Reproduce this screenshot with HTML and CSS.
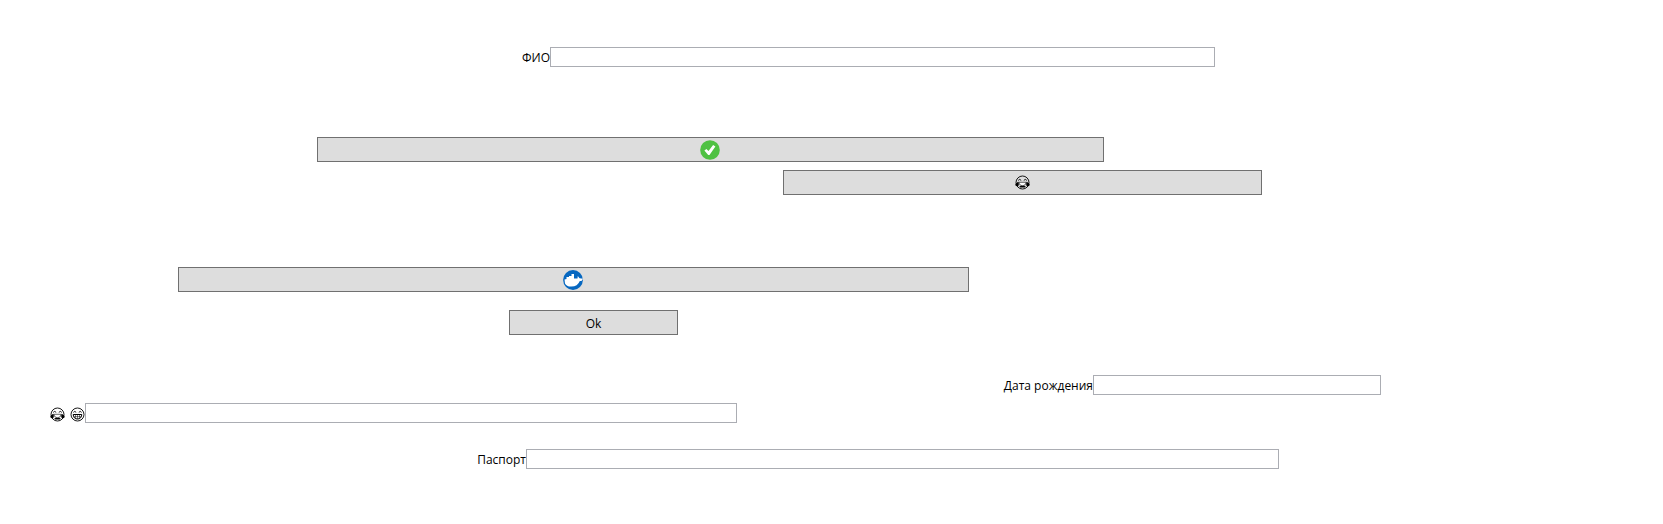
FILE: index.html
```
<!DOCTYPE html>
<html lang="ru">
<head>
<meta charset="utf-8">
<title>Анкета</title>
<link rel="stylesheet" href="styles.css">
</head>
<body>
<svg class="defs" aria-hidden="true">
  <symbol id="joy" viewBox="0 0 15 15">
    <circle cx="7.5" cy="7.5" r="6.5" fill="none" stroke="#000" stroke-width=".9"/>
    <path d="M3.2 5.4Q4.7 3.4 6.2 5.4M8.8 5.4Q10.3 3.4 11.8 5.4" fill="none" stroke="#000" stroke-width=".9"/>
    <path d="M3.8 7.3H11.2Q10.8 10.8 7.5 10.8T3.8 7.3Z" fill="#fff" stroke="#000" stroke-width=".6"/>
    <path d="M3.4 6.8Q4.4 10.3 3 11.2Q.3 11.8.3 9.6Q.7 7.8 3.4 6.8ZM11.6 6.8Q10.6 10.3 12 11.2Q14.7 11.8 14.7 9.6Q14.3 7.8 11.6 6.8Z" fill="#000"/>
    <path d="M4.2 11.2Q7.5 10.3 10.8 11.2L9.8 12.4H5.2Z" fill="#000"/>
  </symbol>
  <symbol id="grin" viewBox="0 0 15 15">
    <circle cx="7.5" cy="7.5" r="6.5" fill="none" stroke="#000" stroke-width=".9"/>
    <path d="M3.4 5.4Q4.8 3.4 6.2 5.4M8.8 5.4Q10.2 3.4 11.6 5.4" fill="none" stroke="#000" stroke-width=".9"/>
    <path d="M3.2 7.5H11.8Q11.4 12 7.5 12T3.2 7.5Z" fill="#fff" stroke="#000"/>
    <path d="M3.5 9.6H11.5M5.5 7.5V11.5M7.5 7.5V12M9.5 7.5V11.5" fill="none" stroke="#000" stroke-width=".5"/>
  </symbol>
</svg>
<form class="form">
  <div class="field field-name">
    <label for="name">ФИО</label>
    <input class="box" id="name" type="text">
  </div>
  <button class="btn btn-check" type="button" aria-label="Готово">
    <svg class="icon" viewBox="0 0 20 20"><circle cx="10" cy="10" r="9.8" fill="#4fc143"/><path d="M4.4 10.6L6.4 8.9L8.5 11L13.1 5.1L15.4 6.6L9.5 15H8.2Z" fill="#fff"/></svg>
  </button>
  <button class="btn btn-joy" type="button" aria-label="Смех">
    <svg class="emoji"><use href="#joy"/></svg>
  </button>
  <button class="btn btn-whale" type="button" aria-label="Docker">
    <svg class="icon" viewBox="0 0 20 20"><circle cx="10" cy="10" r="9.9" fill="#0667c0"/><path d="M1.5 9.5L3.5 9V7H6V6H8.5V4H11V8.5H14.5L14.8 6L16.5 8.2L20 8.8L18.5 11H16.8Q14.5 16.8 8 16.6Q3.4 16.3 2 13.4Z" fill="#fff"/></svg>
  </button>
  <button class="btn btn-ok" type="button">Ok</button>
  <div class="field field-date">
    <label for="date">Дата рождения</label>
    <input class="box" id="date" type="text">
  </div>
  <div class="field field-emoji">
    <label for="mood" aria-label="Настроение"><svg class="emoji"><use href="#joy"/></svg><svg class="emoji"><use href="#grin"/></svg></label>
    <input class="box" id="mood" type="text">
  </div>
  <div class="field field-passport">
    <label for="passport">Паспорт</label>
    <input class="box" id="passport" type="text">
  </div>
</form>
</body>
</html>
```
FILE: styles.css
```
* {
  box-sizing: border-box;
}

body {
  margin: 0;
  background: #fff;
  color: #000;
  font: 12px/16px "Open Sans", "Noto Sans", sans-serif;
}

.defs {
  display: none;
}

.form {
  display: flex;
  flex-direction: column;
  padding: 47px 0 55px;
}

.field {
  display: grid;
  height: 20px;
}

.field label {
  display: flex;
  justify-content: flex-end;
  align-items: flex-end;
  gap: 5px;
  height: 20px;
  line-height: 18px;
  white-space: nowrap;
}

.box {
  width: 100%;
  min-width: 0;
  height: 20px;
  padding: 0 3px;
  border: 1px solid #abadb3;
  border-radius: 0;
  background: #fff;
  font: inherit;
  outline: none;
}

.btn {
  display: flex;
  justify-content: center;
  align-items: center;
  height: 25px;
  padding: 0;
  border: 1px solid #707070;
  border-radius: 0;
  background: #ddd;
  color: #000;
  font: inherit;
}

.icon {
  display: block;
  width: 20px;
  height: 20px;
}

.emoji {
  display: block;
  width: 15px;
  height: 15px;
}

.field-name {
  grid-template-columns: 550px 1fr;
  margin-right: 448px;
}

.btn-check,
.btn-whale {
  padding-right: 2px;
}

.btn-check {
  margin: 70px 559px 0 317px;
}

.btn-joy {
  margin: 8px 401px 0 783px;
}

.btn-whale {
  margin: 72px 694px 0 178px;
}

.btn-ok {
  margin: 18px 985px 0 509px;
  padding-top: 2px;
}

.field-date {
  grid-template-columns: 1093px 1fr;
  margin: 40px 282px 0 0;
}

.field-emoji {
  grid-template-columns: 85px 1fr;
  margin: 8px 926px 0 0;
}

.field-emoji label {
  padding-bottom: 1px;
}

.field-passport {
  grid-template-columns: 526px 1fr;
  margin: 26px 384px 0 0;
}
```
